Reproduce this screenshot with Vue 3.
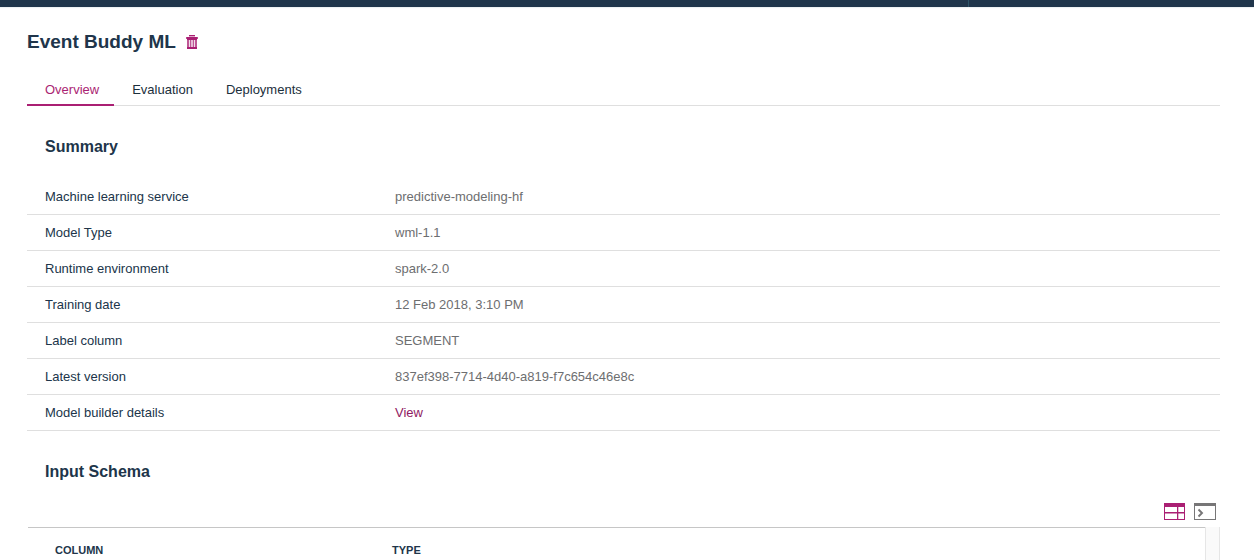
<script setup>
import { ref } from 'vue'

const tabs = ['Overview', 'Evaluation', 'Deployments']
const active = ref('Overview')

const summary = [
  { label: 'Machine learning service', value: 'predictive-modeling-hf' },
  { label: 'Model Type', value: 'wml-1.1' },
  { label: 'Runtime environment', value: 'spark-2.0' },
  { label: 'Training date', value: '12 Feb 2018, 3:10 PM' },
  { label: 'Label column', value: 'SEGMENT' },
  { label: 'Latest version', value: '837ef398-7714-4d40-a819-f7c654c46e8c' },
  { label: 'Model builder details', value: 'View', link: true },
]
</script>

<template>
  <div class="page">
    <header class="topbar"><span class="topbar-end"></span></header>
    <main class="content">
      <div class="title-row">
        <h1>Event Buddy ML</h1>
        <button class="icon-button" type="button" aria-label="Delete model">
          <svg width="12" height="14" viewBox="0 0 12 14" fill="#aa1f73">
            <path d="M3 0h6v1H3zM1 2h10v3H1zM1 12h10v2H1z" />
            <path d="M3 1h6v1H3z" opacity=".4" />
            <path d="M0 2h12v2H0z" opacity=".8" />
            <path d="M1 5h2v7H1zM4 5h1v7H4zM7 5h1v7H7zM9 5h2v7H9z" opacity=".75" />
            <path d="M5 5h2v7H5z" opacity=".3" />
            <path d="M3 5h1v7H3zM8 5h1v7H8z" opacity=".15" />
          </svg>
        </button>
      </div>

      <nav class="tabs" role="tablist">
        <button
          v-for="tab in tabs"
          :key="tab"
          type="button"
          role="tab"
          class="tab"
          :class="{ active: tab === active }"
          :aria-selected="tab === active"
          @click="active = tab"
        >{{ tab }}</button>
      </nav>

      <section>
        <h2>Summary</h2>
        <table class="summary">
          <tbody>
            <tr v-for="row in summary" :key="row.label">
              <th scope="row">{{ row.label }}</th>
              <td>
                <a v-if="row.link" href="#">{{ row.value }}</a>
                <template v-else>{{ row.value }}</template>
              </td>
            </tr>
          </tbody>
        </table>
      </section>

      <section>
        <h2>Input Schema</h2>
        <div class="views">
          <button class="icon-button" type="button" aria-label="Table view">
            <svg width="21" height="17" viewBox="0 0 21 17" fill="#aa1f73">
              <path d="M0 0h21v4H0zM0 4h1v13H0zM20 4h1v13h-1zM0 16h21v1H0zM1 9h19v1.500H1zM13 4h1.300v12H13z" />
            </svg>
          </button>
          <button class="icon-button" type="button" aria-label="Code view">
            <svg width="22" height="17" viewBox="0 0 22 17" fill="#777677">
              <path d="M0 0h22v3H0zM0 3h1v14H0zM21 3h1v14h-1zM0 16h22v1H0z" />
              <path d="M4.500 6.500L8 10l-3.500 3.500" fill="none" stroke="#777677" stroke-width="1.900" />
            </svg>
          </button>
        </div>
        <div class="schema">
          <table>
            <thead>
              <tr>
                <th scope="col">COLUMN</th>
                <th scope="col">TYPE</th>
              </tr>
            </thead>
          </table>
          <div class="track"></div>
        </div>
      </section>
    </main>
  </div>
</template>

<style>
body {
  background: #fff;
  overflow-x: hidden;
}
</style>

<style scoped>
.page {
  font-family: "Liberation Sans", Arial, sans-serif;
  font-size: 13px;
  color: #20354a;
  height: 100vh;
  overflow: hidden;
}
.topbar {
  height: 7px;
  background: #20354b;
  box-shadow: 0 1px 1px #eef1f3;
  display: flex;
  justify-content: flex-end;
}
.topbar-end {
  width: 285px;
  border-left: 1px solid #2d5468;
}
.content {
  padding: 0 34px 0 27px;
}
.title-row {
  display: flex;
  align-items: center;
  gap: 10px;
  padding-top: 23px;
}
h1 {
  margin: 0;
  font-size: 19px;
  line-height: 24px;
}
.icon-button {
  display: flex;
  padding: 0;
  border: 0;
  background: none;
  cursor: pointer;
}
.tabs {
  display: flex;
  margin-top: 20px;
  height: 31px;
  border-bottom: 1px solid #dfdfdf;
}
.tab {
  height: 32px;
  padding: 1px 15px 0 18px;
  border: 0;
  border-bottom: 2px solid transparent;
  background: none;
  font: inherit;
  line-height: 30px;
  color: #1b2f3c;
  cursor: pointer;
}
.tab.active {
  color: #aa1f73;
  border-bottom-color: #aa1f73;
}
h2 {
  margin: 0;
  padding: 31px 18px 0;
  font-size: 16px;
  line-height: 20px;
}
table {
  width: 100%;
  border-collapse: collapse;
}
.summary {
  margin-top: 22px;
  table-layout: fixed;
}
.summary th,
.summary td {
  height: 35px;
  padding: 0;
  border-bottom: 1px solid #dfdfdf;
  text-align: left;
  font-weight: 400;
}
.summary th {
  width: 350px;
  padding-left: 18px;
}
.summary td {
  color: #6d6e70;
}
.summary a {
  color: #8f1a62;
  text-decoration: none;
}
.views {
  display: flex;
  justify-content: flex-end;
  gap: 9px;
  margin-top: 21px;
  padding-right: 4px;
}
.schema {
  display: flex;
  margin: 7px 0 0 1px;
}
.schema table {
  flex: 1;
  table-layout: fixed;
  border-top: 1px solid #c6c6c6;
}
.schema th {
  height: 44px;
  padding: 0 0 0 27px;
  text-align: left;
  font-size: 11px;
}
.schema th:first-child {
  width: 310px;
}
.track {
  width: 13px;
  border: 1px solid #e6e6e6;
  border-width: 0 1px;
  background: #fafafa;
}
</style>
